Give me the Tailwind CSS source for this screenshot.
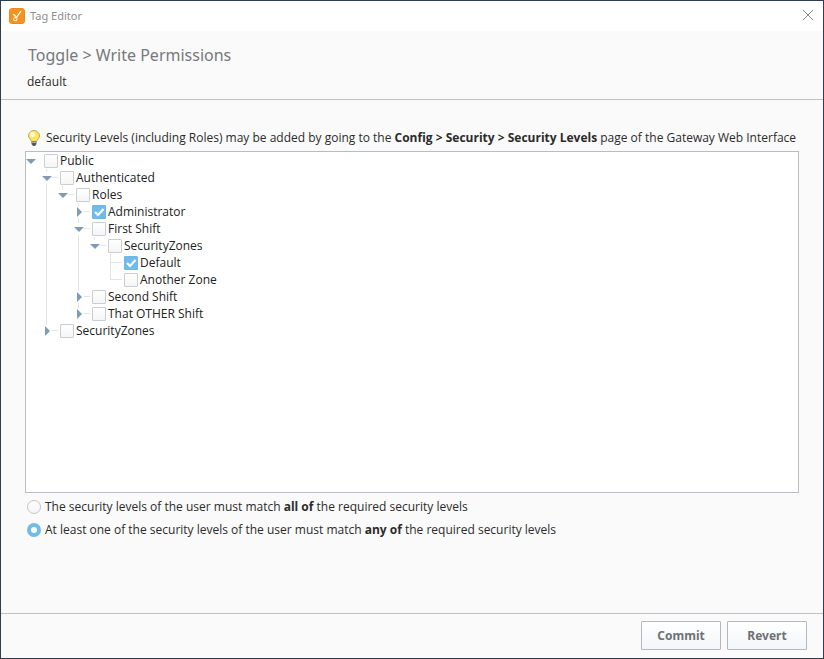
<!DOCTYPE html>
<html lang="en">
<head>
<meta charset="utf-8">
<title>Tag Editor</title>
<script src="https://cdn.jsdelivr.net/npm/@tailwindcss/browser@4"></script>
</head>
<body class="flex min-h-screen flex-col border border-[#2d3e50] bg-[#fafafa] font-['Open_Sans','Noto_Sans',sans-serif] text-xs text-[#2b2b2b]">
<svg class="hidden" aria-hidden="true">
  <symbol id="down" viewBox="0 0 10 10"><path d="M0 3h10L5 8z" fill="#7f9bb5"/></symbol>
  <symbol id="right" viewBox="0 0 10 10"><path d="M3 0v10l5-5z" fill="#7f9bb5"/></symbol>
</svg>

<div class="flex h-[30px] items-center bg-white pr-2.5 pl-2">
  <svg class="size-4" viewBox="0 0 16 16" aria-hidden="true">
    <rect x=".5" y=".5" width="15" height="15" rx="2.5" fill="#f7921e" stroke="#e98a22"/>
    <path d="M4.200 6.200L5.800 7.500 7.200 9.800 12 3" fill="none" stroke="#fff" stroke-width="1.300"/>
    <path d="M7.200 9.500C4.500 9.500 4 11 5 12.500L7.500 12.800 8.200 10.500" fill="none" stroke="#fff"/>
  </svg>
  <span class="ml-[5px] grow font-['Noto_Sans',sans-serif] text-[11px] text-[#8e8e8e]">Tag Editor</span>
  <button type="button" aria-label="Close" class="pb-0.5"><svg class="size-2.5" viewBox="0 0 10 10" aria-hidden="true"><path d="M0 0l10 10M10 0L0 10" stroke="#888" fill="none"/></svg></button>
</div>

<header class="border-b border-[#c0c2c4] px-[26px] pt-3 pb-[7px]">
  <h1 class="pl-px font-['Noto_Sans',sans-serif] text-base leading-6 text-[#77797c]">Toggle &gt; Write Permissions</h1>
  <p class="mt-[5px] leading-5">default</p>
</header>

<main class="flex grow flex-col px-6 pt-7 pb-[73px]">
  <p class="flex items-center leading-5 whitespace-nowrap">
    <svg class="mx-px mr-1 size-4 shrink-0" viewBox="0 0 16 16" aria-hidden="true">
      <path d="M8 .5a5.500 5.500 0 0 0-5.500 5.500c0 2.300 2.500 3.500 3 5.500h5c.5-2 3-3.200 3-5.500A5.500 5.500 0 0 0 8 .5z" fill="#f9e763" stroke="#c5ab4a"/>
      <ellipse cx="6.500" cy="4.500" rx="2.500" ry="2.500" fill="#fffbd0"/>
      <path d="M5.500 11.500h5v2.500l-1.500 2H7l-1.500-2z" fill="#555a60"/>
      <path d="M5.500 12.500h5" stroke="#a9adb3"/>
    </svg>
    <span>Security Levels (including Roles) may be added by going to the <b>Config &gt; Security &gt; Security Levels</b> page of the Gateway Web Interface</span>
  </p>

  <ul role="tree" aria-label="Security levels" class="mt-[3px] min-h-[342px] grow border border-[#b9bcc0] bg-white leading-[17px] text-[#222]">
    <li role="treeitem" aria-expanded="true">
      <div class="flex h-[17px] items-center">
        <button type="button" aria-label="Collapse Public" class="mr-2"><svg class="size-2.5"><use href="#down"/></svg></button>
        <input id="public" type="checkbox" class="size-3.5 appearance-none rounded-[1px] border border-[#cbcdd0] bg-linear-to-b from-white to-[#f4f5f6]">
        <label for="public" class="pl-0.5">Public</label>
      </div>
      <ul role="group" class="ml-4">
        <li role="treeitem" aria-expanded="true" class="relative before:absolute before:inset-y-0 before:left-1 before:w-px before:bg-[#e2e4e9]">
          <div class="relative flex h-[17px] items-center">
            <button type="button" aria-label="Collapse Authenticated" class="bg-white py-px"><svg class="size-2.5"><use href="#down"/></svg></button>
            <span class="mr-0.5 h-px w-1.5 bg-[#e2e4e9]"></span>
            <input id="auth" type="checkbox" class="size-3.5 appearance-none rounded-[1px] border border-[#cbcdd0] bg-linear-to-b from-white to-[#f4f5f6]">
            <label for="auth" class="pl-0.5">Authenticated</label>
          </div>
          <ul role="group" class="ml-4">
            <li role="treeitem" aria-expanded="true" class="relative before:absolute before:top-0 before:left-1 before:h-2 before:w-px before:bg-[#e2e4e9]">
              <div class="relative flex h-[17px] items-center">
                <button type="button" aria-label="Collapse Roles" class="bg-white py-px"><svg class="size-2.5"><use href="#down"/></svg></button>
                <span class="mr-0.5 h-px w-1.5 bg-[#e2e4e9]"></span>
                <input id="roles" type="checkbox" class="size-3.5 appearance-none rounded-[1px] border border-[#cbcdd0] bg-linear-to-b from-white to-[#f4f5f6]">
                <label for="roles" class="pl-0.5">Roles</label>
              </div>
              <ul role="group" class="ml-4">
                <li role="treeitem" aria-expanded="false" class="relative before:absolute before:inset-y-0 before:left-1 before:w-px before:bg-[#e2e4e9]">
                  <div class="relative flex h-[17px] items-center">
                    <button type="button" aria-label="Expand Administrator" class="bg-white py-px"><svg class="size-2.5"><use href="#right"/></svg></button>
                    <span class="mr-0.5 h-px w-1.5 bg-[#e2e4e9]"></span>
                    <span class="grid size-3.5">
                      <input id="admin" type="checkbox" checked class="col-start-1 row-start-1 size-3.5 appearance-none rounded-[1px] border border-[#cbcdd0] checked:border-[#6cb8e8] checked:bg-[#70bbea]">
                      <svg class="pointer-events-none col-start-1 row-start-1 size-3.5" viewBox="0 0 14 14" aria-hidden="true"><path d="M3 7l3 3 5.500-6" fill="none" stroke="#fff" stroke-width="2.200"/></svg>
                    </span>
                    <label for="admin" class="pl-0.5">Administrator</label>
                  </div>
                </li>
                <li role="treeitem" aria-expanded="true" class="relative before:absolute before:inset-y-0 before:left-1 before:w-px before:bg-[#e2e4e9]">
                  <div class="relative flex h-[17px] items-center">
                    <button type="button" aria-label="Collapse First Shift" class="bg-white py-px"><svg class="size-2.5"><use href="#down"/></svg></button>
                    <span class="mr-0.5 h-px w-1.5 bg-[#e2e4e9]"></span>
                    <input id="first" type="checkbox" class="size-3.5 appearance-none rounded-[1px] border border-[#cbcdd0] bg-linear-to-b from-white to-[#f4f5f6]">
                    <label for="first" class="pl-0.5">First Shift</label>
                  </div>
                  <ul role="group" class="ml-4">
                    <li role="treeitem" aria-expanded="true" class="relative before:absolute before:top-0 before:left-1 before:h-2 before:w-px before:bg-[#e2e4e9]">
                      <div class="relative flex h-[17px] items-center">
                        <button type="button" aria-label="Collapse SecurityZones" class="bg-white py-px"><svg class="size-2.5"><use href="#down"/></svg></button>
                        <span class="mr-0.5 h-px w-1.5 bg-[#e2e4e9]"></span>
                        <input id="shift-zones" type="checkbox" class="size-3.5 appearance-none rounded-[1px] border border-[#cbcdd0] bg-linear-to-b from-white to-[#f4f5f6]">
                        <label for="shift-zones" class="pl-0.5">SecurityZones</label>
                      </div>
                      <ul role="group" class="ml-4">
                        <li role="treeitem" class="relative before:absolute before:inset-y-0 before:left-1 before:w-px before:bg-[#e2e4e9]">
                          <div class="flex h-[17px] items-center pl-1">
                            <span class="mr-0.5 h-px w-3 bg-[#e2e4e9]"></span>
                            <span class="grid size-3.5">
                              <input id="default" type="checkbox" checked class="col-start-1 row-start-1 size-3.5 appearance-none rounded-[1px] border border-[#cbcdd0] checked:border-[#6cb8e8] checked:bg-[#70bbea]">
                              <svg class="pointer-events-none col-start-1 row-start-1 size-3.5" viewBox="0 0 14 14" aria-hidden="true"><path d="M3 7l3 3 5.500-6" fill="none" stroke="#fff" stroke-width="2.200"/></svg>
                            </span>
                            <label for="default" class="pl-0.5">Default</label>
                          </div>
                        </li>
                        <li role="treeitem" class="relative before:absolute before:top-0 before:left-1 before:h-2 before:w-px before:bg-[#e2e4e9]">
                          <div class="flex h-[17px] items-center pl-1">
                            <span class="mr-0.5 h-px w-3 bg-[#e2e4e9]"></span>
                            <input id="another" type="checkbox" class="size-3.5 appearance-none rounded-[1px] border border-[#cbcdd0] bg-linear-to-b from-white to-[#f4f5f6]">
                            <label for="another" class="pl-0.5">Another Zone</label>
                          </div>
                        </li>
                      </ul>
                    </li>
                  </ul>
                </li>
                <li role="treeitem" aria-expanded="false" class="relative before:absolute before:inset-y-0 before:left-1 before:w-px before:bg-[#e2e4e9]">
                  <div class="relative flex h-[17px] items-center">
                    <button type="button" aria-label="Expand Second Shift" class="bg-white py-px"><svg class="size-2.5"><use href="#right"/></svg></button>
                    <span class="mr-0.5 h-px w-1.5 bg-[#e2e4e9]"></span>
                    <input id="second" type="checkbox" class="size-3.5 appearance-none rounded-[1px] border border-[#cbcdd0] bg-linear-to-b from-white to-[#f4f5f6]">
                    <label for="second" class="pl-0.5">Second Shift</label>
                  </div>
                </li>
                <li role="treeitem" aria-expanded="false" class="relative before:absolute before:top-0 before:left-1 before:h-2 before:w-px before:bg-[#e2e4e9]">
                  <div class="relative flex h-[17px] items-center">
                    <button type="button" aria-label="Expand That OTHER Shift" class="bg-white py-px"><svg class="size-2.5"><use href="#right"/></svg></button>
                    <span class="mr-0.5 h-px w-1.5 bg-[#e2e4e9]"></span>
                    <input id="other" type="checkbox" class="size-3.5 appearance-none rounded-[1px] border border-[#cbcdd0] bg-linear-to-b from-white to-[#f4f5f6]">
                    <label for="other" class="pl-0.5">That OTHER Shift</label>
                  </div>
                </li>
              </ul>
            </li>
          </ul>
        </li>
        <li role="treeitem" aria-expanded="false" class="relative before:absolute before:top-0 before:left-1 before:h-2 before:w-px before:bg-[#e2e4e9]">
          <div class="relative flex h-[17px] items-center">
            <button type="button" aria-label="Expand SecurityZones" class="bg-white py-px"><svg class="size-2.5"><use href="#right"/></svg></button>
            <span class="mr-0.5 h-px w-1.5 bg-[#e2e4e9]"></span>
            <input id="zones" type="checkbox" class="size-3.5 appearance-none rounded-[1px] border border-[#cbcdd0] bg-linear-to-b from-white to-[#f4f5f6]">
            <label for="zones" class="pl-0.5">SecurityZones</label>
          </div>
        </li>
      </ul>
    </li>
  </ul>

  <div class="mt-1 flex flex-col gap-[3px] pl-0.5 leading-5">
    <div class="flex items-center gap-1">
      <input id="match-all" type="radio" name="match" class="size-3.5 appearance-none rounded-full border border-[#c3c5c8] bg-linear-to-b from-white to-[#f4f5f6] checked:border-4 checked:border-[#70bbea]">
      <label for="match-all">The security levels of the user must match <b>all of</b> the required security levels</label>
    </div>
    <div class="flex items-center gap-1">
      <input id="match-any" type="radio" name="match" checked class="size-3.5 appearance-none rounded-full border border-[#c3c5c8] bg-white checked:border-4 checked:border-[#70bbea]">
      <label for="match-any">At least one of the security levels of the user must match <b>any of</b> the required security levels</label>
    </div>
  </div>
</main>

<footer class="flex justify-end gap-1.5 border-t border-[#c0c2c4] px-4 pt-[7px] pb-2">
  <button type="button" class="h-[29px] w-20 rounded-[1px] border border-[#b4b8bc] bg-linear-to-b from-white to-[#f3f6fa] font-['Noto_Sans',sans-serif] font-bold text-[#6e7276]">Commit</button>
  <button type="button" class="h-[29px] w-20 rounded-[1px] border border-[#b4b8bc] bg-linear-to-b from-white to-[#f3f6fa] font-['Noto_Sans',sans-serif] font-bold text-[#6e7276]">Revert</button>
</footer>
</body>
</html>
